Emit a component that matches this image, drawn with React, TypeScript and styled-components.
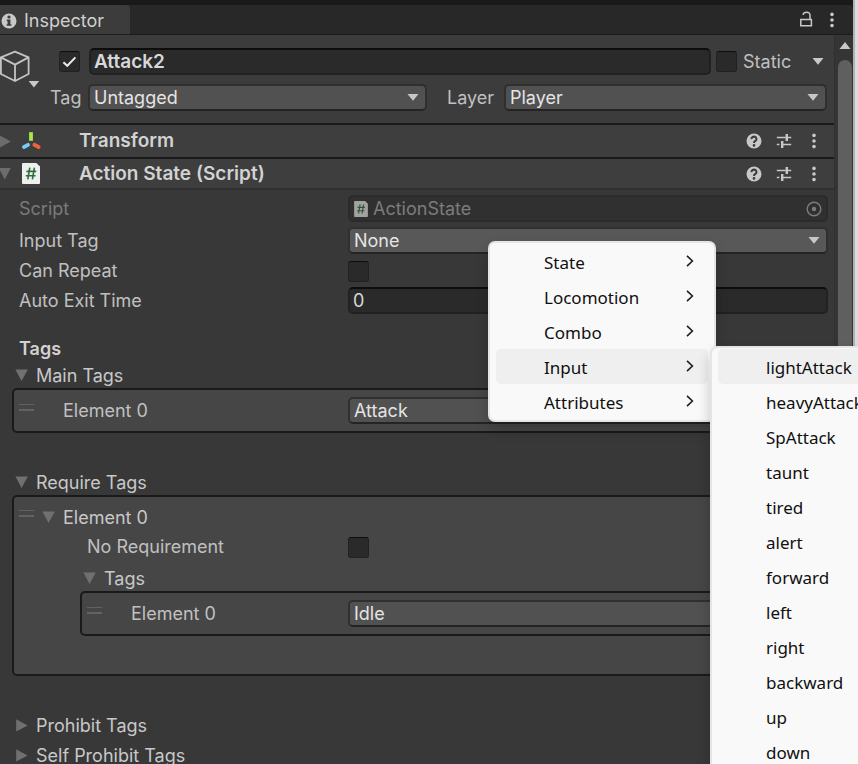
import React, { useId } from "react";
import styled, { createGlobalStyle, css } from "styled-components";

const GlobalStyle = createGlobalStyle`
  *, *::before, *::after { box-sizing: border-box; }
  html, body, #root { height: 100%; }
  body {
    margin: 0;
    overflow: hidden;
    background: #383838;
    color: #c4c4c4;
    font-family: Inter, "Liberation Sans", sans-serif;
    font-size: 18px;
    line-height: 24px;
  }
  button, input, select { font: inherit; color: inherit; margin: 0; }
`;

/* ---------- window frame ---------- */

const Frame = styled.div`
  display: flex;
  height: 100vh;
  overflow: hidden;
`;

const Window = styled.main`
  flex: 1;
  min-width: 0;
  display: flex;
  flex-direction: column;
  background: #191919;
  padding-top: 5px;
`;

const DesktopEdge = styled.div`
  width: 5px;
  background: #dcdadb;
  border-left: 2px solid #b4b2b3;
`;

const TabBar = styled.header`
  display: flex;
  align-items: stretch;
  height: 30px;
  flex: none;
  background: #282828;
  border-bottom: 1px solid #1c1c1c;
  border-top-right-radius: 4px;
`;

const Tab = styled.button`
  display: flex;
  align-items: center;
  gap: 7px;
  width: 130px;
  padding: 2px 0 0 1px;
  border: 0;
  border-top-right-radius: 4px;
  background: #3c3c3c;
  color: #d0d0d0;
`;

const TabTools = styled.div`
  margin-left: auto;
  display: flex;
  align-items: center;
  gap: 17px;
  padding-right: 19px;
`;

const IconButton = styled.button`
  display: flex;
  align-items: center;
  justify-content: center;
  padding: 0;
  border: 0;
  background: none;
  color: #c8c8c8;
`;

const Content = styled.div`
  flex: 1;
  min-height: 0;
  display: flex;
`;

const Panel = styled.div`
  flex: 1;
  min-width: 0;
  background: #383838;
`;

const ScrollTrack = styled.div`
  width: 19px;
  display: flex;
  flex-direction: column;
  align-items: center;
  gap: 11px;
  padding: 7px 0 0 2px;
  background: #353535;
  border-left: 1px solid #303030;
`;

const ScrollThumb = styled.div`
  flex: 1;
  width: 14px;
  border-radius: 7px 7px 0 0;
  background: #5f5f5f;
`;

/* ---------- controls ---------- */

const fieldShape = css`
  width: 100%;
  height: 27px;
  border: 2px solid #303030;
  border-radius: 5px;
  padding: 0 4px;
`;

const TextInput = styled.input<{ $title?: boolean }>`
  ${fieldShape}
  flex: 1;
  min-width: 0;
  padding: 0 3px;
  background: #2a2a2a;
  border-color: #0d0d0d #212121 #212121;
  color: #d8d8d8;
  ${(p) => p.$title && "font-size: 19px; font-weight: 600;"}
`;

const SelectWrap = styled.div`
  display: grid;
  align-items: center;
  min-width: 0;
  flex: 1;
  position: relative;
  > select, > svg { grid-area: 1 / 1; }
  > svg { justify-self: end; margin-right: 8px; pointer-events: none; }
`;

const Select = styled.select<{ $active?: boolean }>`
  ${fieldShape}
  appearance: none;
  background: ${(p) => (p.$active ? "#585858" : "#515151")};
  border-bottom-color: #242424;
  color: #e4e4e4;
`;

const CheckWrap = styled.span`
  display: grid;
  place-items: center;
  width: 21px;
  height: 21px;
  > * { grid-area: 1 / 1; }
  > svg { pointer-events: none; }
`;

const Check = styled.input`
  appearance: none;
  width: 21px;
  height: 21px;
  border: 1px solid #212121;
  border-top-color: #0d0d0d;
  border-radius: 3px;
  background: #2a2a2a;
`;

const ObjectField = styled.div`
  ${fieldShape}
  display: flex;
  align-items: center;
  gap: 5px;
  background: #303030;
  border-color: #2b2b2b;
  color: #7c7c7c;
  > button { margin-left: auto; color: #7c7c7c; }
`;

const Label = styled.label<{ $dim?: boolean }>`
  color: ${(p) => (p.$dim ? "#7a7a7a" : "#c0c0c0")};
  white-space: nowrap;
`;

/* ---------- object header ---------- */

const ObjectHeader = styled.section`
  display: grid;
  grid-template-columns: 50px 1fr;
  padding: 13px 7px 12px 0;
  background: #3c3c3c;
`;

const ObjectIcon = styled(IconButton)`
  align-self: start;
  justify-content: flex-start;
`;

const HeaderRows = styled.div`
  display: flex;
  flex-direction: column;
  gap: 9px;
  min-width: 0;
`;

const NameRow = styled.div`
  display: flex;
  align-items: center;
  gap: 5px;
  padding-left: 9px;
`;

const NameGroup = styled.div`
  flex: 1;
  min-width: 0;
  display: flex;
  align-items: center;
  gap: 9px;
`;

const StaticGroup = styled.div`
  display: flex;
  align-items: center;
  gap: 6px;
  width: 111px;
  padding-right: 3px;
  > button { margin-left: auto; }
`;

const TagRow = styled.div`
  display: grid;
  grid-template-columns: 38px 339fr 77px 323fr;
  align-items: center;
  > label:nth-of-type(2) { padding-left: 20px; }
`;

/* ---------- component headers ---------- */

const ComponentBar = styled.section<{ $open?: boolean }>`
  display: grid;
  grid-template-columns: 22px 57px 1fr auto;
  align-items: center;
  height: ${(p) => (p.$open ? 33 : 34)}px;
  border-top: 2px solid #1a1a1a;
  background: #3e3e3e;
  padding-right: 18px;
  ${(p) => p.$open && "border-bottom: 2px solid #303030;"}
`;

const ComponentTitle = styled.h2`
  margin: 0;
  font-size: 19px;
  font-weight: 600;
  color: #d2d2d2;
`;

const BarTools = styled.div`
  display: flex;
  align-items: center;
  > button { width: 30px; }
  > button:last-child { width: 4px; margin-left: 13px; }
`;

/* ---------- property list ---------- */

const Body = styled.div`
  padding: 5px 6px 0 12px;
`;

const Fields = styled.div`
  display: grid;
  gap: 5px;
  padding-left: 7px;
`;

const Field = styled.div<{ $labelWidth: number; $gapTop?: number }>`
  display: grid;
  grid-template-columns: ${(p) => p.$labelWidth}px 1fr;
  align-items: center;
  margin-top: ${(p) => p.$gapTop ?? 0}px;
`;

const CheckField = styled(Field)`
  height: 20px;
`;

const GroupTitle = styled.h3`
  margin: 23px 0 1px 7px;
  font-size: 18px;
  font-weight: 600;
  line-height: 24px;
  color: #d2d2d2;
`;

const Foldout = styled.button`
  display: flex;
  align-items: center;
  gap: 8px;
  height: 26px;
  padding: 1px 0 0 3px;
  border: 0;
  background: none;
  color: #c8c8c8;
  text-align: left;
  > svg { color: #707070; }
`;

const ListBox = styled.div<{ $gapAfter?: number }>`
  border: 2px solid #1a1a1a;
  border-radius: 5px;
  background: #464646;
  margin-bottom: ${(p) => p.$gapAfter ?? 0}px;
`;

const ElementRow = styled.div<{ $labelWidth: number }>`
  display: grid;
  grid-template-columns: 49px ${(p) => p.$labelWidth}px 1fr;
  align-items: center;
  padding: 7px 5px 7px 0;
`;

const HandleIcon = styled.svg`
  margin: 0 0 6px 5px;
  color: #626262;
`;

const ElementHead = styled.div`
  display: flex;
  align-items: center;
  padding-top: 7px;
`;

const ElementFoldout = styled(Foldout)`
  padding-left: 8px;
`;

const ElementBody = styled.div`
  padding: 5px 0 38px 66px;
`;

const Indented = styled.div`
  padding-left: 7px;
  margin-bottom: 10px;
`;

const FoldoutStack = styled.div`
  display: grid;
  gap: 4px;
`;

/* ---------- popup menus ---------- */

const Menu = styled.ul<{ $sub?: boolean }>`
  position: absolute;
  z-index: ${(p) => (p.$sub ? 3 : 2)};
  top: ${(p) => (p.$sub ? "-3px" : "14px")};
  left: ${(p) => (p.$sub ? "calc(100% + 2px)" : "140px")};
  width: 228px;
  margin: 0;
  padding: 1px 6px;
  list-style: none;
  border: 2px solid #e5e5e5;
  border-radius: 7px;
  background: #f9f9f9;
  box-shadow: 0 8px 14px rgba(0, 0, 0, 0.2);
  font-family: "Noto Sans", "Open Sans", sans-serif;
  font-size: 17px;
`;

const MenuEntry = styled.li`
  position: relative;
`;

const MenuItem = styled.button<{ $selected?: boolean }>`
  display: flex;
  align-items: center;
  justify-content: space-between;
  width: 100%;
  height: 35px;
  padding: 2px 14px 0 48px;
  border: 0;
  border-radius: 5px;
  background: ${(p) => (p.$selected ? "#efefef" : "transparent")};
  color: #101010;
  text-align: left;
  > svg { margin-bottom: 4px; }
`;

/* ---------- icons ---------- */

const Caret = ({ up }: { up?: boolean }) => (
  <svg width="12" height="7" viewBox="0 0 12 7" fill="#c8c8c8" aria-hidden="true">
    <path d={up ? "M6 0 11.5 7H.5z" : "M.5 0h11L6 6.8z"} />
  </svg>
);

const FoldArrow = ({ open }: { open?: boolean }) => (
  <svg width="13" height="13" viewBox="0 0 13 13" fill="currentColor" aria-hidden="true">
    <path d={open ? "M.4 .6h12.4L6.6 12z" : "M1.2.2v12.4L12.6 6.4z"} />
  </svg>
);

const BarFold = styled.button`
  padding: 0;
  border: 0;
  background: none;
  display: flex;
  color: #6c6c6c;
`;

const BarArrow = ({ open }: { open?: boolean }) => (
  <svg width="11" height="13" viewBox="0 0 11 13" fill="currentColor" aria-hidden="true">
    <path d={open ? "M0 1h10.8L4.8 12.4 0 3.6z" : "M0 .4 10.8 6.6 0 12.6z"} />
  </svg>
);

const InfoIcon = () => (
  <svg width="16" height="16" viewBox="0 0 16 16" aria-hidden="true">
    <circle cx="8" cy="8" r="7.5" fill="#c8c8c8" />
    <circle cx="8" cy="4" r="1.6" fill="#3c3c3c" />
    <path d="M5.8 6.6h3.6v4.6h1v1.6H5.6v-1.6h1V8.2h-.8z" fill="#3c3c3c" />
  </svg>
);

const LockIcon = () => (
  <svg width="14" height="17" viewBox="0 0 14 17" fill="none" stroke="currentColor" strokeWidth="1.5" aria-hidden="true">
    <path d="M1.8 8.6h10.6v6.2H1.8z" />
    <path d="M11 8.4V4.4Q11 1.2 7.6 1.2 4.6 1.2 4 3.8" />
  </svg>
);

const DotsIcon = () => (
  <svg width="4" height="16" viewBox="0 0 4 16" fill="currentColor" aria-hidden="true">
    <circle cx="2" cy="2.4" r="1.8" />
    <circle cx="2" cy="8" r="1.8" />
    <circle cx="2" cy="13.6" r="1.8" />
  </svg>
);

const HelpIcon = () => (
  <svg width="16" height="16" viewBox="0 0 16 16" aria-hidden="true">
    <circle cx="8" cy="8" r="7.5" fill="#c8c8c8" />
    <path d="M5.5 6.2A2.5 2.3 0 1 1 9.6 7.7C8.5 8.5 8 8.7 8 10" fill="none" stroke="#3a3a3a" strokeWidth="2" />
    <circle cx="8" cy="12.4" r="1.3" fill="#3a3a3a" />
  </svg>
);

const PresetIcon = () => (
  <svg width="16" height="16" viewBox="0 0 16 16" stroke="currentColor" fill="none" aria-hidden="true">
    <path d="M.8 4.5h9M11.5 4.5h3.7M.8 11.5h2.6M6.5 11.5h8.7" strokeWidth="1.4" />
    <path d="M10.8 1v7M6.2 8v7" strokeWidth="2.4" />
  </svg>
);

const CubeIcon = () => (
  <svg width="40" height="40" viewBox="0 0 40 40" fill="none" stroke="#c4c4c4" strokeWidth="1.8" strokeLinejoin="round" aria-hidden="true">
    <path d="M15 3.6 28.6 9.4v16.6L15 33 .9 26V9.4zM.9 9.4 15 16.6l13.6-7.2M15 16.6V33" />
    <path d="M28.6 33h10.6l-5.3 6.4z" fill="#c8c8c8" stroke="none" />
  </svg>
);

const CheckMark = () => (
  <svg width="15" height="12" viewBox="0 0 15 12" fill="none" stroke="#e8e8e8" strokeWidth="2" aria-hidden="true">
    <path d="M1.4 6.2 5.3 9.8 13.4 1.4" />
  </svg>
);

const AxesIcon = () => (
  <svg width="20" height="18" viewBox="0 0 20 18" strokeWidth="3.8" aria-hidden="true">
    <path d="M9 .2v8.6" stroke="#a8e84c" />
    <path d="M6 12.8 2 15" stroke="#78ccf4" strokeLinecap="round" />
    <path d="M12.4 12.8 16.6 15" stroke="#f0623a" strokeLinecap="round" />
  </svg>
);

const ScriptIcon = ({ small }: { small?: boolean }) => (
  <svg width={small ? 14 : 18} height={small ? 16 : 21} viewBox="0 0 18 21" opacity={small ? 0.6 : 1} aria-hidden="true">
    <path d="M1 0h13.4L18 3.6V20q0 1-1 1H1q-1 0-1-1V1q0-1 1-1z" fill="#efefef" />
    <path d="M7.8 4.6 5.8 16.4M12.4 4.6l-2 11.8M4.4 8.4h9.8M3.8 12.8h9.8" stroke="#2c7038" strokeWidth="1.6" fill="none" />
  </svg>
);

const PickerIcon = () => (
  <svg width="16" height="16" viewBox="0 0 16 16" aria-hidden="true">
    <circle cx="8" cy="8" r="6.8" fill="none" stroke="currentColor" strokeWidth="1.4" />
    <circle cx="8" cy="8" r="2.2" fill="currentColor" />
  </svg>
);

const Handle = () => (
  <HandleIcon width="15" height="8" viewBox="0 0 15 8" fill="currentColor" aria-hidden="true">
    <path d="M0 0h15v1H0zM0 5h15v2H0z" />
  </HandleIcon>
);

const Chevron = () => (
  <svg width="8" height="12" viewBox="0 0 8 12" fill="none" stroke="#202020" strokeWidth="1.6" aria-hidden="true">
    <path d="M1 .8 6.4 6 1 11.2" />
  </svg>
);

/* ---------- composed parts ---------- */

type DropdownProps = {
  id: string;
  value: string;
  active?: boolean;
  children?: React.ReactNode;
};

const Dropdown = ({ id, value, active, children }: DropdownProps) => (
  <SelectWrap>
    <Select id={id} $active={active} defaultValue={value}>
      <option>{value}</option>
    </Select>
    <Caret />
    {children}
  </SelectWrap>
);

const Checkbox = ({ id, label, checked }: { id: string; label?: string; checked?: boolean }) => (
  <CheckWrap>
    <Check type="checkbox" id={id} aria-label={label} defaultChecked={checked} />
    {checked && <CheckMark />}
  </CheckWrap>
);

const ComponentHeader = ({ title, icon, open }: { title: string; icon: React.ReactNode; open?: boolean }) => (
  <ComponentBar $open={open}>
    <BarFold aria-label={`Toggle ${title}`} aria-expanded={!!open}>
      <BarArrow open={open} />
    </BarFold>
    {icon}
    <ComponentTitle>{title}</ComponentTitle>
    <BarTools>
      <IconButton aria-label="Help"><HelpIcon /></IconButton>
      <IconButton aria-label="Presets"><PresetIcon /></IconButton>
      <IconButton aria-label="More"><DotsIcon /></IconButton>
    </BarTools>
  </ComponentBar>
);

const ElementField = ({ value, labelWidth }: { value: string; labelWidth: number }) => {
  const id = useId();
  return (
    <ElementRow $labelWidth={labelWidth}>
      <Handle />
      <Label htmlFor={id}>Element 0</Label>
      <Dropdown id={id} value={value} />
    </ElementRow>
  );
};

const categories = ["State", "Locomotion", "Combo", "Input", "Attributes"];

const inputTags = [
  "lightAttack", "heavyAttack", "SpAttack", "taunt", "tired", "alert",
  "forward", "left", "right", "backward", "up", "down",
];

const TagMenu = () => (
  <Menu role="menu" aria-label="Tag categories">
    {categories.map((name) => (
      <MenuEntry key={name} role="none">
        <MenuItem role="menuitem" aria-haspopup="menu" $selected={name === "Input"}>
          {name}
          <Chevron />
        </MenuItem>
        {name === "Input" && (
          <Menu $sub role="menu" aria-label="Input tags">
            {inputTags.map((tag, i) => (
              <MenuEntry key={tag} role="none">
                <MenuItem role="menuitem" $selected={i === 0}>{tag}</MenuItem>
              </MenuEntry>
            ))}
          </Menu>
        )}
      </MenuEntry>
    ))}
  </Menu>
);

export default function App() {
  return (
    <Frame>
      <GlobalStyle />
      <Window>
        <TabBar>
          <Tab><InfoIcon />Inspector</Tab>
          <TabTools>
            <IconButton aria-label="Lock"><LockIcon /></IconButton>
            <IconButton aria-label="Tab menu"><DotsIcon /></IconButton>
          </TabTools>
        </TabBar>
        <Content>
          <Panel>
            <ObjectHeader>
              <ObjectIcon aria-label="Object icon"><CubeIcon /></ObjectIcon>
              <HeaderRows>
                <NameRow>
                  <NameGroup>
                    <Checkbox id="active" label="Active" checked />
                    <TextInput $title aria-label="Name" defaultValue="Attack2" />
                  </NameGroup>
                  <StaticGroup>
                    <Checkbox id="static" />
                    <Label htmlFor="static">Static</Label>
                    <IconButton aria-label="Static options"><Caret /></IconButton>
                  </StaticGroup>
                </NameRow>
                <TagRow>
                  <Label htmlFor="tag">Tag</Label>
                  <Dropdown id="tag" value="Untagged" />
                  <Label htmlFor="layer">Layer</Label>
                  <Dropdown id="layer" value="Player" />
                </TagRow>
              </HeaderRows>
            </ObjectHeader>

            <ComponentHeader title="Transform" icon={<AxesIcon />} />
            <ComponentHeader title="Action State (Script)" icon={<ScriptIcon />} open />

            <Body>
              <Fields>
                <Field $labelWidth={329}>
                  <Label as="span" $dim>Script</Label>
                  <ObjectField>
                    <ScriptIcon small />
                    ActionState
                    <IconButton aria-label="Pick script"><PickerIcon /></IconButton>
                  </ObjectField>
                </Field>
                <Field $labelWidth={329}>
                  <Label htmlFor="input-tag">Input Tag</Label>
                  <Dropdown id="input-tag" value="None" active>
                    <TagMenu />
                  </Dropdown>
                </Field>
                <CheckField $labelWidth={329}>
                  <Label htmlFor="can-repeat">Can Repeat</Label>
                  <Checkbox id="can-repeat" />
                </CheckField>
                <Field $labelWidth={329} $gapTop={3}>
                  <Label htmlFor="exit-time">Auto Exit Time</Label>
                  <TextInput id="exit-time" defaultValue="0" />
                </Field>
              </Fields>

              <GroupTitle>Tags</GroupTitle>
              <Foldout aria-expanded="true"><FoldArrow open />Main Tags</Foldout>
              <ListBox $gapAfter={36}>
                <ElementField value="Attack" labelWidth={285} />
              </ListBox>

              <Foldout aria-expanded="true"><FoldArrow open />Require Tags</Foldout>
              <ListBox $gapAfter={36}>
                <ElementHead>
                  <Handle />
                  <ElementFoldout aria-expanded="true"><FoldArrow open />Element 0</ElementFoldout>
                </ElementHead>
                <ElementBody>
                  <Indented>
                    <CheckField $labelWidth={261}>
                      <Label htmlFor="no-requirement">No Requirement</Label>
                      <Checkbox id="no-requirement" />
                    </CheckField>
                  </Indented>
                  <Foldout aria-expanded="true"><FoldArrow open />Tags</Foldout>
                  <ListBox>
                    <ElementField value="Idle" labelWidth={217} />
                  </ListBox>
                </ElementBody>
              </ListBox>

              <FoldoutStack>
                <Foldout aria-expanded="false"><FoldArrow />Prohibit Tags</Foldout>
                <Foldout aria-expanded="false"><FoldArrow />Self Prohibit Tags</Foldout>
              </FoldoutStack>
            </Body>
          </Panel>
          <ScrollTrack>
            <Caret up />
            <ScrollThumb />
          </ScrollTrack>
        </Content>
      </Window>
      <DesktopEdge />
    </Frame>
  );
}
